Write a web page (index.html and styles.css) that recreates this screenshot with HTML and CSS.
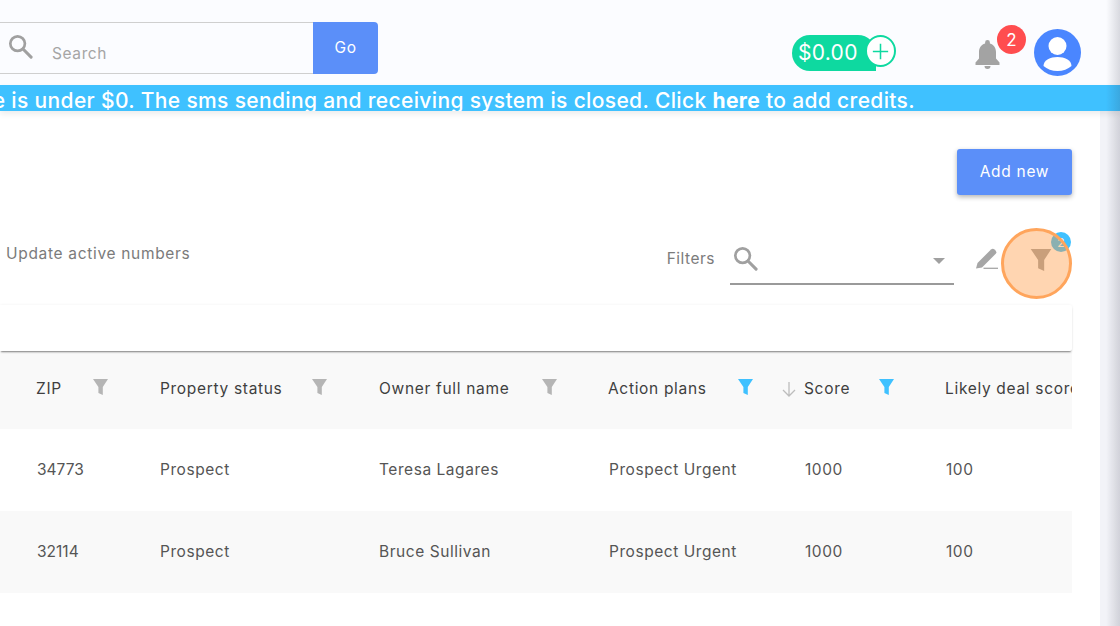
FILE: index.html
```html
<!DOCTYPE html>
<html lang="en">
<head>
<meta charset="utf-8">
<title>Numbers</title>
<link rel="stylesheet" href="styles.css">
</head>
<body>
<svg class="defs" width="0" height="0" aria-hidden="true">
  <symbol id="i-search" viewBox="0 0 26 26"><circle cx="10" cy="10" r="7.6" fill="none" stroke="currentColor" stroke-width="2.8"/><path d="M15.6 15.6 24 24" fill="none" stroke="currentColor" stroke-width="3.2" stroke-linecap="round"/></symbol>
  <symbol id="i-funnel" viewBox="0 0 15 16"><path d="M0 0h15L9.800 8V16L5.400 14V8z" fill="currentColor"/></symbol>
</svg>
<header class="topbar">
  <form class="search">
    <div class="search-field">
      <svg class="search-icon"><use href="#i-search"/></svg>
      <span class="search-text">Search</span>
    </div>
    <div class="go">Go</div>
  </form>
  <div class="balance">
    <span class="pill">$0.00</span>
    <span class="plus"><svg viewBox="0 0 20 20" width="17" height="17"><path d="M10 1v18M1 10h18" stroke="#0ed9a0" stroke-width="1.8"/></svg></span>
  </div>
  <div class="bell">
    <svg viewBox="0 0 25 29" width="25" height="29"><path d="M12.5 0a2.4 2.4 0 0 0-2.4 2.4v1C6 4.500 4 8 4 12v6.500L.5 22.500V25h24v-2.500L21 18.500V12c0-4-2-7.500-6.100-8.600v-1A2.400 2.400 0 0 0 12.500 0zM9.500 26a3 3 0 0 0 6 0z" fill="#a3a3a3"/></svg>
    <span class="bell-badge">2</span>
  </div>
  <div class="avatar">
    <svg viewBox="0 0 47 47" width="47" height="47"><circle cx="23.500" cy="23.500" r="23.500" fill="#4a86ff"/><circle cx="23.500" cy="17" r="9" fill="#fff"/><path d="M9.500 37c0-6 7-9 14-9s14 3 14 9c-3.500 3-8.500 5-14 5s-10.500-2-14-5z" fill="#fff"/></svg>
  </div>
</header>
<div class="banner"><p>Your balance is under $0. The sms sending and receiving system is closed. Click <strong>here</strong> to add credits.</p></div>
<div class="layout">
  <main class="content">
    <div class="actions"><button class="add" type="button">Add new</button></div>
    <div class="tools">
      <span class="update">Update active numbers</span>
      <div class="tools-right">
        <span class="filters-label">Filters</span>
        <div class="filter-select">
          <svg class="select-icon"><use href="#i-search"/></svg>
          <span class="caret"></span>
        </div>
        <svg class="pencil" viewBox="0 0 22 23" width="22" height="23"><path d="M0 20.500 1.500 15 15 1.500a2.500 2.500 0 0 1 3.500 0l1 1a2.500 2.500 0 0 1 0 3.500L6 19.500z" fill="#a6a6a6"/><path d="M7.500 20.300H22" stroke="#a6a6a6" stroke-width="1.300"/></svg>
        <div class="funnel-btn">
          <svg class="funnel-main"><use href="#i-funnel"/></svg>
          <span class="funnel-badge">2</span>
          <span class="highlight"></span>
        </div>
      </div>
    </div>
    <div class="strip"></div>
    <div class="table">
      <div class="row head">
        <div class="cell c-zip"><span>ZIP</span><svg class="f"><use href="#i-funnel"/></svg></div>
        <div class="cell c-status"><span>Property status</span><svg class="f"><use href="#i-funnel"/></svg></div>
        <div class="cell c-owner"><span>Owner full name</span><svg class="f"><use href="#i-funnel"/></svg></div>
        <div class="cell c-plan"><span>Action plans</span><svg class="f on"><use href="#i-funnel"/></svg></div>
        <div class="cell c-score"><svg class="sort" viewBox="0 0 14 15" width="14" height="15"><path d="M7 0v14M1 8l6 6 6-6" fill="none" stroke="#bdbdbd" stroke-width="1.300"/></svg><span>Score</span><svg class="f on"><use href="#i-funnel"/></svg></div>
        <div class="cell c-deal"><span>Likely deal score</span></div>
      </div>
      <div class="row">
        <div class="cell c-zip">34773</div>
        <div class="cell c-status">Prospect</div>
        <div class="cell c-owner">Teresa Lagares</div>
        <div class="cell c-plan">Prospect Urgent</div>
        <div class="cell c-score">1000</div>
        <div class="cell c-deal">100</div>
      </div>
      <div class="row alt">
        <div class="cell c-zip">32114</div>
        <div class="cell c-status">Prospect</div>
        <div class="cell c-owner">Bruce Sullivan</div>
        <div class="cell c-plan">Prospect Urgent</div>
        <div class="cell c-score">1000</div>
        <div class="cell c-deal">100</div>
      </div>
    </div>
  </main>
  <aside class="track"></aside>
</div>
<div class="edge-shade"></div>
</body>
</html>
```
FILE: styles.css
```css
* { box-sizing: border-box; }
html, body { margin: 0; height: 100%; overflow: hidden; }
body { font-family: Inter, "Noto Sans", sans-serif; background: #fff; color: #4a4a4a; display: flex; flex-direction: column; }
.defs { position: absolute; }
.edge-shade { position: fixed; top: 0; right: 0; bottom: 0; width: 14px; background: linear-gradient(90deg, rgba(40,40,60,0), rgba(40,40,60,.16)); pointer-events: none; }

.topbar { height: 85px; background: #fbfcff; display: flex; align-items: flex-start; flex: none; }
.search { display: flex; height: 52px; margin: 22px 0 0 -12px; width: 390px; flex: none; }
.search-field { flex: 1; border: 1px solid #cfcfcf; border-left: 0; border-right: 0; display: flex; align-items: center; padding-left: 20px; }
.search-icon { width: 25px; height: 25px; color: #a0a0a0; margin-top: -4px; }
.search-text { margin-left: 19px; font-size: 15.500px; letter-spacing: .6px; color: #a5a5a5; margin-top: 10px; }
.go { width: 65px; background: #5b8ff9; color: #fff; border-radius: 0 4px 4px 0; display: flex; align-items: center; justify-content: center; font-size: 15.500px; letter-spacing: .6px; padding-bottom: 1px; }

.balance { margin: 35px 0 0 414px; display: flex; align-items: flex-start; width: 104px; flex: none; }
.pill { width: 84px; height: 36px; background: #0ed9a0; color: #fff; border-radius: 18px 18px 0 18px; font-size: 21px; letter-spacing: .3px; line-height: 36px; padding-left: 6px; flex: none; }
.plus { width: 31px; height: 32px; margin-left: -11px; background: #fff; border: 2px solid #0ed9a0; border-radius: 50%; display: flex; align-items: center; justify-content: center; flex: none; }

.bell { position: relative; margin: 40px 0 0 79px; width: 25px; height: 29px; flex: none; }
.bell svg { display: block; }
.bell-badge { position: absolute; left: 22px; top: -15px; width: 29px; height: 29px; border-radius: 50%; background: #ff4d4f; color: #fff; font-size: 17px; display: flex; align-items: center; justify-content: center; }
.avatar { margin: 29px 0 0 34px; flex: none; width: 47px; height: 47px; }
.avatar svg { display: block; }

.banner { height: 26px; background: #3fc1ff; color: #fff; flex: none; overflow: hidden; display: flex; justify-content: flex-end; padding-right: 205px; box-shadow: 0 3px 6px rgba(0,0,0,.08); position: relative; }
.banner p { margin: 0; white-space: nowrap; font-size: 21px; font-weight: 500; line-height: 31px; letter-spacing: .35px; }
.banner strong { font-weight: 700; }

.layout { flex: 1; display: flex; min-height: 0; }
.content { width: 1100px; flex: none; padding: 38px 28px 0 0; overflow: hidden; }
.track { flex: 1; background: #f2f3f8; }

.actions { display: flex; justify-content: flex-end; }
.add { width: 115px; height: 46px; border: 0; border-radius: 3px; background: #5b8ff9; color: #fff; font: inherit; font-size: 15.500px; letter-spacing: .7px; box-shadow: 0 2px 5px rgba(0,0,0,.3); padding-bottom: 3px; }

.tools { display: flex; justify-content: space-between; align-items: flex-start; height: 110px; }
.update { margin: 49px 0 0 6px; font-size: 15.500px; letter-spacing: .68px; color: #7b7b7b; }
.tools-right { display: flex; align-items: flex-start; }
.filters-label { margin: 54px 0 0 0; font-size: 15.500px; letter-spacing: .5px; color: #7b7b7b; }
.filter-select { width: 224px; height: 58px; margin: 32px 0 0 15px; border-bottom: 2px solid #9a9a9a; display: flex; align-items: center; justify-content: space-between; padding: 0 9px 0 3px; position: relative; }
.select-icon { width: 25px; height: 25px; color: #a0a0a0; margin-top: 6px; }
.caret { width: 0; height: 0; border: 6.500px solid transparent; border-top-color: #a0a0a0; border-bottom: 0; margin-top: 12px; }
.pencil { margin: 53px 0 0 22px; flex: none; }
.funnel-btn { position: relative; width: 22px; height: 22px; margin: 54px 20px 0 32px; flex: none; }
.funnel-main { display: block; width: 22px; height: 22px; color: #a6a6a6; }
.funnel-badge { position: absolute; left: 21px; top: -17px; width: 20px; height: 20px; border-radius: 50%; background: #3fc1ff; color: #fff; font-size: 12px; display: flex; align-items: center; justify-content: center; }
.highlight { position: absolute; left: -29px; top: -21px; width: 71px; height: 71px; border-radius: 50%; background: rgba(255,150,60,.4); border: 3px solid #ffa55c; }

.strip { height: 46px; background: #fff; border-radius: 0 2px 2px 0; box-shadow: 0 2px 2px -1px rgba(0,0,0,.5), 0 0 3px rgba(0,0,0,.06); position: relative; }

.table { margin-top: 1px; }
.row { display: grid; grid-template-columns: 36px 124px 219px 229px 196px 141px 1fr; height: 82px; align-items: center; font-size: 15.500px; letter-spacing: .55px; color: #555; padding-bottom: 2px; }
.row::before { content: ""; }
.head { height: 77px; background: #f9f9f9; color: #3f3f3f; padding-bottom: 4px; letter-spacing: .68px; }
.alt { background: #f9f9f9; }
.cell { white-space: nowrap; position: relative; }
.row:not(.head) .cell { padding-left: 1px; }
.row:not(.head) .c-status, .row:not(.head) .c-owner { padding-left: 0; }
.row:not(.head) .c-zip { letter-spacing: 0; }
.head .cell { display: flex; justify-content: space-between; align-items: center; padding-right: 52px; }
.head .c-owner, .head .c-plan, .head .c-score { padding-right: 51px; }
.c-deal { overflow: hidden; }
.head .c-deal { padding-right: 0; }
.f { width: 15px; height: 16px; color: #b5b5b5; flex: none; margin-top: -4px; }
.f.on { color: #3fc1ff; }
.sort { position: absolute; left: -22px; top: 3px; }
```
